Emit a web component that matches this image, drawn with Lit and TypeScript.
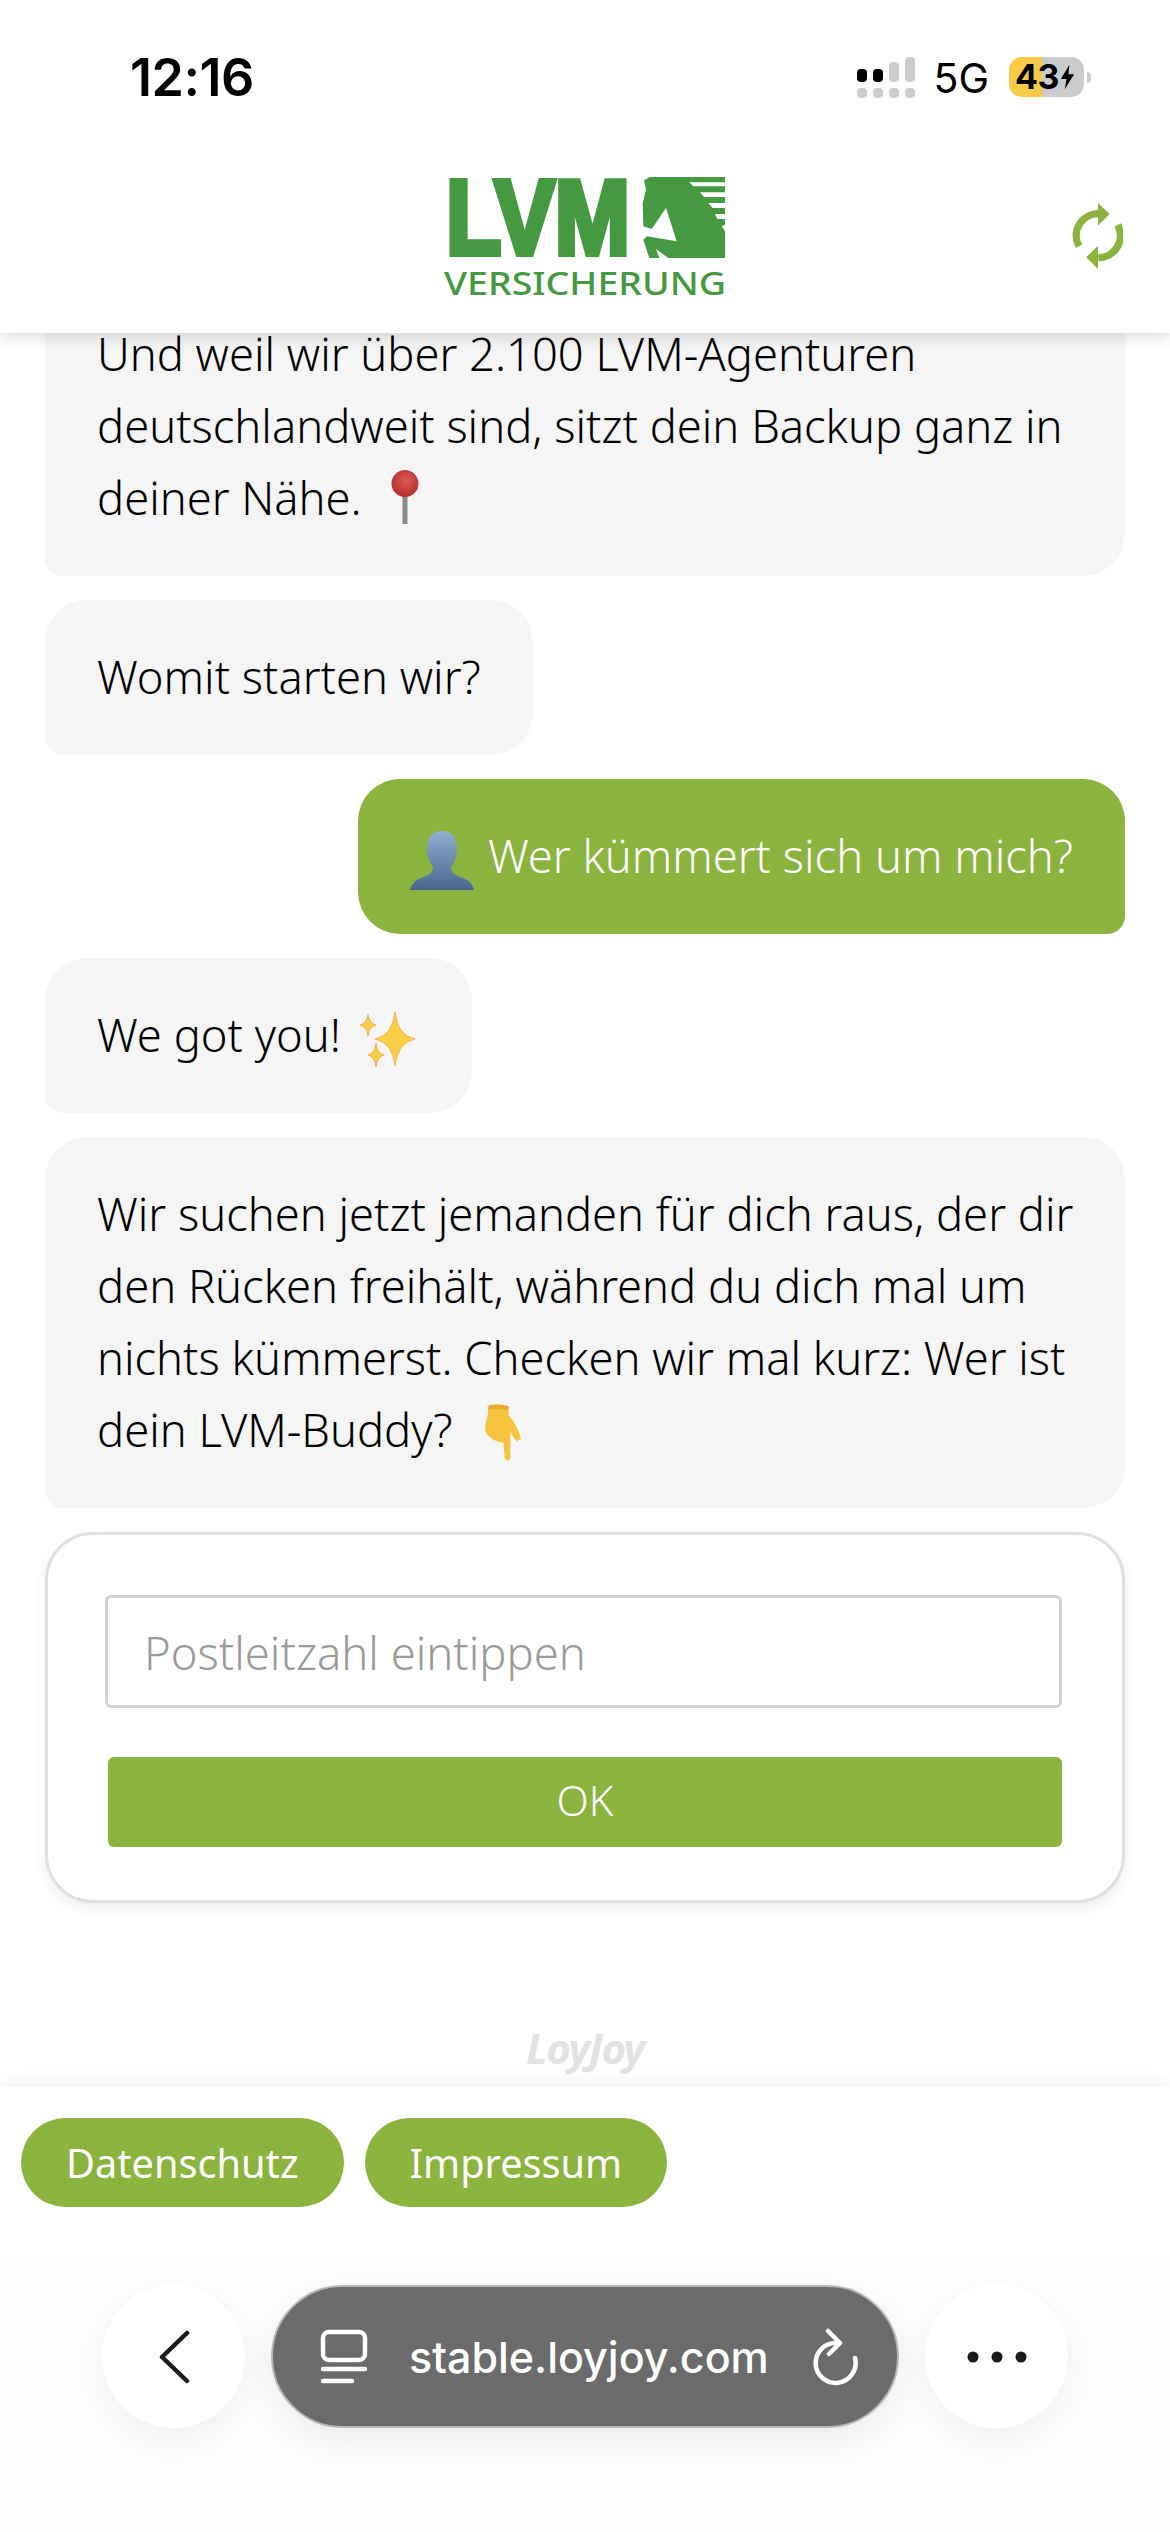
import { LitElement, css, html, svg } from "lit";
import { customElement } from "lit/decorators.js";

const pin = html`<svg class="emoji pin" viewBox="0 0 40 64">
  <defs><radialGradient id="pinHead" cx="0.55" cy="0.4" r="0.65"><stop offset="0" stop-color="#dd5a54"/><stop offset="1" stop-color="#ad2c2a"/></radialGradient></defs>
  <rect x="17" y="26" width="6" height="38" fill="#8f8a85"/>
  <circle cx="20" cy="16" r="16" fill="url(#pinHead)"/>
</svg>`;

const person = html`<svg class="emoji person" viewBox="0 0 64 60">
  <defs><linearGradient id="bust" x1="0" y1="0" x2="0" y2="1"><stop offset="0" stop-color="#8fb0d0"/><stop offset="1" stop-color="#46668e"/></linearGradient></defs>
  <path fill="url(#bust)" d="M32 0C44 0 48 10 47 21C46 29 42 34 41 37C41 42 47 45 53 47C59 49 63 54 64 59L0 59C1 54 5 49 11 47C17 45 23 42 23 37C22 34 18 29 17 21C16 10 20 0 32 0Z"/>
</svg>`;

const star = (cx: number, cy: number, rx: number, ry: number) =>
  svg`<path fill="#f9ce45" stroke="#f3b04e" stroke-width="1" d="M${cx} ${cy - ry}Q${cx + rx * 0.12} ${cy - ry * 0.14} ${cx + rx} ${cy}Q${cx + rx * 0.12} ${cy + ry * 0.14} ${cx} ${cy + ry}Q${cx - rx * 0.12} ${cy + ry * 0.14} ${cx - rx} ${cy}Q${cx - rx * 0.12} ${cy - ry * 0.14} ${cx} ${cy - ry}Z"/>`;

const sparkles = html`<svg class="emoji sparkles" viewBox="0 0 58 56">
  ${star(38, 27, 20, 27)}${star(11, 13, 8, 11)}${star(19, 43, 8, 12)}
</svg>`;

const hand = html`<svg class="emoji hand" viewBox="60 30 125 185">
  <path fill="#f6c33e" d="M78 38Q110 30 140 40L140 68Q165 95 178 140L165 148Q150 130 145 118L145 200Q138 214 128 200L124 152Q90 150 72 125Q62 105 75 70Z"/>
  <path fill="#eaa92e" d="M78 38Q110 30 140 40L139 52Q110 46 78 50Z"/>
</svg>`;

@customElement("app-root")
export class AppRoot extends LitElement {
  static styles = css`
    :host {
      display: flex;
      flex-direction: column;
      width: 1170px;
      height: 2532px;
      overflow: hidden;
      background: #fff;
      font-family: "Noto Sans", sans-serif;
      font-weight: 300;
      color: #000;
    }

    .top {
      height: 333px;
      flex: none;
      position: relative;
      z-index: 2;
      background: #fff;
      box-shadow: 0 3px 16px rgba(0, 0, 0, 0.16);
    }

    .status {
      height: 157px;
      padding: 57px 79px 0 130px;
      box-sizing: border-box;
      display: flex;
      align-items: flex-start;
      font-family: Inter, sans-serif;
    }
    .time {
      font-size: 52px;
      font-weight: 600;
      line-height: 42px;
      letter-spacing: -0.5px;
      color: #000;
      margin-right: auto;
    }
    .signal {
      display: grid;
      grid-template-columns: repeat(4, 10px);
      grid-template-rows: 25px 10px;
      column-gap: 6px;
      row-gap: 6px;
      align-items: end;
      margin-right: 18px;
    }
    .signal span {
      background: #cccccc;
      border-radius: 4px;
    }
    .signal .on { background: #000; }
    .signal .b1 { height: 13px; }
    .signal .b2 { height: 20px; }
    .signal .b3 { height: 25px; }
    .signal .dot { height: 10px; }
    .net {
      font-size: 41px;
      font-weight: 400;
      line-height: 42px;
      color: #000;
      margin-right: 20px;
    }
    .battery {
      width: 75px;
      height: 40px;
      border-radius: 13px;
      background: linear-gradient(90deg, #f7cb47 0 33px, #cbcbcb 33px);
      display: flex;
      align-items: center;
      padding-left: 6px;
      box-sizing: border-box;
      font-size: 34px;
      font-weight: 700;
      color: #000;
      line-height: 40px;
      letter-spacing: -0.5px;
    }
    .battery svg { width: 17px; height: 28px; flex: none; }
    .nub {
      width: 4px;
      height: 11px;
      margin: 15px 0 0 3px;
      background: #cbcbcb;
      border-radius: 0 4px 4px 0;
    }

    .brand {
      display: grid;
      grid-template-columns: 1fr auto 1fr;
      padding: 19px 47px 0;
    }
    .logo { grid-column: 2; width: 282px; height: 122px; display: block; overflow: visible; }
    .sync { justify-self: end; width: 70px; height: 90px; margin-top: 13px; }

    .chat {
      flex: 1;
      min-height: 0;
      display: flex;
      flex-direction: column;
      justify-content: flex-end;
      gap: 24px;
      padding: 0 45px;
      overflow: hidden;
    }
    .bubble {
      flex: none;
      box-sizing: border-box;
      padding: 41px 52px 42px;
      font-size: 45.3px;
      line-height: 72px;
      white-space: nowrap;
      border-radius: 42px;
    }
    .bot {
      align-self: flex-start;
      background: #f5f5f5;
      border-bottom-left-radius: 18px;
    }
    .wide { align-self: stretch; }
    .user {
      align-self: flex-end;
      background: #8bb43e;
      color: #fff;
      border-bottom-right-radius: 18px;
    }

    .emoji { display: inline-block; vertical-align: middle; }
    .pin { width: 40px; height: 54px; margin: -12px 0 0 12px; }
    .person { width: 64px; height: 60px; margin: 0 14px 0 0; }
    .sparkles { width: 58px; height: 56px; margin: 0 5px 0 4px; }
    .hand { width: 42px; height: 60px; margin: -3px 0 0 18px; }

    .card {
      flex: none;
      box-sizing: border-box;
      height: 371px;
      border: 3px solid #dedfe0;
      border-radius: 48px;
      background: #fff;
      box-shadow: 0 6px 14px rgba(0, 0, 0, 0.07);
      padding: 60px 60px 0 57px;
      display: flex;
      flex-direction: column;
    }
    .card input {
      height: 113px;
      box-sizing: border-box;
      width: 100%;
      border: 3px solid #cfd3d5;
      border-radius: 6px;
      padding: 0 36px;
      font: 300 45.4px "Noto Sans", sans-serif;
      outline: none;
    }
    .card input::placeholder { color: #9a9a9a; opacity: 1; }
    .card button {
      margin: 49px 0 0 3px;
      height: 90px;
      padding: 0 0 5px;
      border: 0;
      border-radius: 6px;
      background: #8bb43e;
      color: #fff;
      font: 300 42px "Noto Sans", sans-serif;
    }

    .credit {
      flex: none;
      margin-top: 98px;
      margin-bottom: 16px;
      text-align: center;
      font-family: "Noto Sans", sans-serif;
      font-size: 42px;
      font-weight: 700;
      font-style: italic;
      line-height: 46px;
      color: #e2e2e2;
      letter-spacing: -1.5px;
    }

    .bottom {
      height: 445px;
      flex: none;
      position: relative;
      z-index: 1;
      background: linear-gradient(#fff 0 130px, #fdfdfd 220px);
      box-shadow: 0 -8px 16px rgba(0, 0, 0, 0.05);
    }
    .chips {
      display: flex;
      gap: 21px;
      padding: 31px 0 0 21px;
    }
    .chip {
      height: 89px;
      border-radius: 45px;
      padding: 0 45px;
      display: flex;
      align-items: center;
      background: #8bb43e;
      color: #fff;
      font-size: 39.7px;
      font-weight: 400;
    }
    .bar {
      margin-top: 78px;
      padding: 0 102px;
      display: flex;
      justify-content: space-between;
      align-items: center;
      gap: 26px;
    }
    .round {
      width: 143px;
      height: 143px;
      flex: none;
      border-radius: 50%;
      background: #fff;
      box-shadow: 0 12px 40px rgba(0, 0, 0, 0.06);
      display: flex;
      align-items: center;
      justify-content: center;
    }
    .url {
      flex: 1;
      height: 143px;
      box-sizing: border-box;
      border: 2px solid #b8b8b8;
      border-radius: 72px;
      background: #6b6b6b;
      box-shadow: 0 12px 40px rgba(0, 0, 0, 0.08);
      display: flex;
      align-items: center;
      padding: 0 37px 0 47px;
      color: #fff;
      font-family: Inter, sans-serif;
      font-size: 43px;
      font-weight: 500;
    }
    .url .label { margin: 0 auto 0 41px; }
  `;

  render() {
    return html`
      <div class="top">
        <div class="status">
          <div class="time">12:16</div>
          <div class="signal">
            <span class="on b1"></span><span class="on b1"></span><span class="b2"></span><span class="b3"></span>
            <span class="dot"></span><span class="dot"></span><span class="dot"></span><span class="dot"></span>
          </div>
          <div class="net">5G</div>
          <div class="battery">43<svg viewBox="0 0 18 28"><path fill="#000" d="M11 1L2 16H8L6 27L16 11H10Z"/></svg></div>
          <div class="nub"></div>
        </div>
        <div class="brand">
          <svg class="logo" viewBox="0 0 282 122">
            <text x="2" y="78" font-family="Liberation Sans" font-weight="700" font-size="105" textLength="184" lengthAdjust="spacingAndGlyphs" fill="#459a41" stroke="#459a41" stroke-width="6" stroke-linejoin="miter">LVM</text>
            <path transform="translate(186 -6.3) scale(.3333)" fill="#459a41" d="M42 32L60 22H285V38H178L190 50H285V68H210L222 82H285V100H235L248 115H285V133H255L262 148H285V165L275 170L285 185V265H115L78 238L88 265H58L40 210L50 200L140 215L108 115L65 178L40 170L38 100L48 60Z"/>
            <text x="0" y="119" font-family="Noto Sans" font-weight="500" font-size="33" textLength="282" lengthAdjust="spacingAndGlyphs" fill="#459a41">VERSICHERUNG</text>
          </svg>
          <svg class="sync" viewBox="0 0 210 270">
            <g fill="none" stroke="#8bb43e" stroke-width="22">
              <path d="M78 172A66 66 0 0 1 136 74"/>
              <path d="M194 108A66 66 0 0 1 136 206"/>
            </g>
            <path fill="#8bb43e" d="M135 42L170 75L135 110ZM135 170L100 205L135 240Z"/>
          </svg>
        </div>
      </div>

      <div class="chat">
        <div class="bubble bot wide">Und weil wir über 2.100 LVM-Agenturen<br />deutschlandweit sind, sitzt dein Backup ganz in<br />deiner Nähe. ${pin}</div>
        <div class="bubble bot">Womit starten wir?</div>
        <div class="bubble user">${person}Wer kümmert sich um mich?</div>
        <div class="bubble bot">We got you! ${sparkles}</div>
        <div class="bubble bot wide">Wir suchen jetzt jemanden für dich raus, der dir<br />den Rücken freihält, während du dich mal um<br />nichts kümmerst. Checken wir mal kurz: Wer ist<br />dein LVM-Buddy? ${hand}</div>
        <div class="card">
          <input placeholder="Postleitzahl eintippen" />
          <button>OK</button>
        </div>
        <div class="credit">LoyJoy</div>
      </div>

      <div class="bottom">
        <div class="chips">
          <div class="chip">Datenschutz</div>
          <div class="chip">Impressum</div>
        </div>
        <div class="bar">
          <div class="round">
            <svg width="32" height="54" viewBox="0 0 32 54"><path fill="none" stroke="#1a1a1a" stroke-width="4.5" stroke-linecap="round" stroke-linejoin="round" d="M29 3L4 27L29 51"/></svg>
          </div>
          <div class="url">
            <svg width="48" height="56" viewBox="0 0 48 56" fill="none" stroke="#fff" stroke-width="4.5" stroke-linecap="round">
              <rect x="3" y="3" width="42" height="28" rx="6"/>
              <path d="M3 40H45M3 52H32"/>
            </svg>
            <span class="label">stable.loyjoy.com</span>
            <svg width="48" height="58" viewBox="0 0 48 58" fill="none" stroke="#fff" stroke-width="4.5" stroke-linecap="round" stroke-linejoin="round">
              <path d="M25 15A20 20 0 1 0 43 30"/>
              <path d="M16 3L28 15L17 26"/>
            </svg>
          </div>
          <div class="round">
            <svg width="60" height="12" viewBox="0 0 60 12" fill="#1a1a1a"><circle cx="6" cy="6" r="5.5"/><circle cx="30" cy="6" r="5.5"/><circle cx="54" cy="6" r="5.5"/></svg>
          </div>
        </div>
      </div>
    `;
  }
}
